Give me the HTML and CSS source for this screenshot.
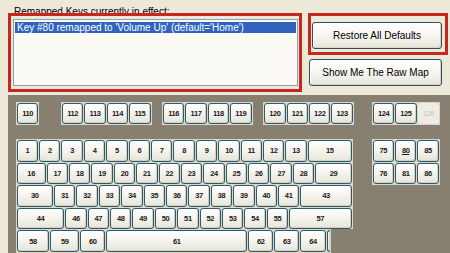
FILE: index.html
```html
<!DOCTYPE html>
<html>
<head>
<meta charset="utf-8">
<link rel="stylesheet" href="styles.css">
</head>
<body>
<div class="top">
  <div class="left">
    <div class="label">Remapped Keys currently in effect:</div>
    <div class="redbox listwrap">
      <div class="listbox">
        <div class="item sel">Key #80 remapped to 'Volume Up' (default='Home')</div>
      </div>
    </div>
  </div>
  <div class="right">
    <div class="redbox btnwrap"><div class="btn restore">Restore All Defaults</div></div>
    <div class="btn raw">Show Me The Raw Map</div>
  </div>
</div>
<div class="panel">
  <div class="frow">
    <div class="grp"><div class="k">110</div></div>
    <div class="grp g2"><div class="k">112</div><div class="k">113</div><div class="k">114</div><div class="k">115</div></div>
    <div class="grp g3"><div class="k">116</div><div class="k">117</div><div class="k">118</div><div class="k">119</div></div>
    <div class="grp g4"><div class="k">120</div><div class="k">121</div><div class="k">122</div><div class="k">123</div></div>
    <div class="grp g5"><div class="k">124</div><div class="k">125</div><div class="k dis">126</div></div>
  </div>
  <div class="mainarea">
    <div class="mainblock">
      <div class="upper">
        <div class="row">
          <div class="k">1</div><div class="k">2</div><div class="k">3</div><div class="k">4</div><div class="k">5</div><div class="k">6</div><div class="k">7</div><div class="k">8</div><div class="k">9</div><div class="k">10</div><div class="k">11</div><div class="k">12</div><div class="k">13</div><div class="k w200">15</div>
        </div>
        <div class="row">
          <div class="k w133">16</div><div class="k">17</div><div class="k">18</div><div class="k">19</div><div class="k">20</div><div class="k">21</div><div class="k">22</div><div class="k">23</div><div class="k">24</div><div class="k">25</div><div class="k">26</div><div class="k">27</div><div class="k">28</div><div class="k w167">29</div>
        </div>
        <div class="row">
          <div class="k w167">30</div><div class="k">31</div><div class="k">32</div><div class="k">33</div><div class="k">34</div><div class="k">35</div><div class="k">36</div><div class="k">37</div><div class="k">38</div><div class="k">39</div><div class="k">40</div><div class="k">41</div><div class="k w233">43</div>
        </div>
        <div class="row">
          <div class="k w217">44</div><div class="k">46</div><div class="k">47</div><div class="k">48</div><div class="k">49</div><div class="k">50</div><div class="k">51</div><div class="k">52</div><div class="k">53</div><div class="k">54</div><div class="k">55</div><div class="k w283">57</div>
        </div>
      </div>
      <div class="lower">
        <div class="row">
          <div class="k w150">58</div><div class="k w133">59</div><div class="k w117">60</div><div class="k w633">61</div><div class="k w117">62</div><div class="k w117">63</div><div class="k w117">64</div><div class="k stub"></div>
        </div>
      </div>
    </div>
    <div class="grp nav">
      <div class="row"><div class="k">75</div><div class="k"><u>80</u></div><div class="k">85</div></div>
      <div class="row"><div class="k">76</div><div class="k">81</div><div class="k">86</div></div>
    </div>
  </div>
</div>
</body>
</html>
```

FILE: styles.css
```css
html, body {
  margin: 0;
  padding: 0;
  width: 450px;
  height: 253px;
  overflow: hidden;
  background: #ECE9D9;
  font-family: "Liberation Sans", Arial, sans-serif;
  color: #000;
}

.top {
  display: flex;
  height: 95px;
}

.left {
  margin-left: 8px;
  width: 294px;
}

.label {
  margin: 7px 0 0 6px;
  font-size: 10px;
  line-height: 10px;
  height: 10px;
  white-space: nowrap;
}

.redbox {
  position: relative;
  box-sizing: border-box;
  border: 3px solid #C8261F;
  background: #ECE9D9;
}

.listwrap {
  margin-top: -4px;
  width: 294px;
  height: 79px;
  padding: 3px 1px 3px 2px;
}

.listbox {
  box-sizing: border-box;
  width: 285px;
  height: 67px;
  border: 1px solid #8A9FB4;
  background: #FBFAF4;
  padding: 2px 1px;
}

.item {
  font-size: 10px;
  line-height: 11px;
  height: 11px;
  padding-left: 2px;
  white-space: nowrap;
}

.sel {
  background: #2F63BE;
  color: #fff;
}

.right {
  margin-left: 6px;
  display: flex;
  flex-direction: column;
}

.btnwrap {
  margin-top: 13px;
  width: 140px;
  height: 42px;
  padding: 6px 3px 3px 1px;
}

.btn {
  box-sizing: border-box;
  display: flex;
  align-items: center;
  justify-content: center;
  font-size: 10px;
  border: 1px solid #2E4E5C;
  border-radius: 3px;
  background: linear-gradient(#FFFFFF, #F5F4EE 55%, #E6E4D8);
  box-shadow: inset -1px -1px 0 #D9D6C8, inset 1px 1px 0 #FFFFFF;
  white-space: nowrap;
}

.restore {
  width: 130px;
  height: 27px;
}

.raw {
  margin-top: 4px;
  margin-left: 1px;
  width: 133px;
  height: 27px;
}

.panel {
  --u: 22.4px;
  margin-left: 8px;
  height: 158px;
  background: #877F70;
  padding: 6.7px 0 0 8px;
  box-sizing: border-box;
  overflow: hidden;
}

.frow {
  display: flex;
}

.grp {
  display: flex;
  background: #D9D7CC;
  padding: 1px 0 1px 1px;
}

.g2 { margin-left: 21.6px; }
.g3 { margin-left: 10.4px; }
.g4 { margin-left: 10.8px; }
.g5 { margin-left: 18px; }

.k {
  box-sizing: border-box;
  flex: none;
  width: calc(var(--u) - 1px);
  height: 21.6px;
  margin-right: 1px;
  border: 1px solid #2F5A6A;
  border-radius: 3px;
  background: linear-gradient(#FFFFFF, #F4F3EC 50%, #E7E5DA);
  box-shadow: inset -1px -1px 0 #D3D0C2;
  display: flex;
  align-items: center;
  justify-content: center;
  font-size: 7.5px;
  font-weight: bold;
  letter-spacing: -0.4px;
  color: #1A1A1A;
}

.k.dis {
  border-color: transparent;
  background: #EFEDE3;
  box-shadow: none;
  color: #C9C5B6;
  font-weight: normal;
}

.w117 { width: calc(var(--u) * 1.1667 - 1px); }
.w133 { width: calc(var(--u) * 1.3333 - 1px); }
.w150 { width: calc(var(--u) * 1.5 - 1px); }
.w167 { width: calc(var(--u) * 1.6667 - 1px); }
.w200 { width: calc(var(--u) * 2 - 1px); }
.w217 { width: calc(var(--u) * 2.1667 - 1px); }
.w233 { width: calc(var(--u) * 2.3333 - 1px); }
.w283 { width: calc(var(--u) * 2.8333 - 1px); }
.w633 { width: calc(var(--u) * 6.3333 - 1px); }

.k.stub {
  width: 3px;
  border-right: none;
  border-radius: 3px 0 0 3px;
}

.mainarea {
  display: flex;
  align-items: flex-start;
  margin-top: 13.7px;
  margin-left: -0.3px;
}

.mainblock {
  display: flex;
  flex-direction: column;
  align-items: flex-start;
}

.row {
  display: flex;
}

.upper {
  background: #D9D7CC;
  padding: 1px 0 0 1px;
}

.upper .row + .row {
  margin-top: 1px;
}

.lower {
  background: #D9D7CC;
  padding: 1px 0 1px 1px;
}

.nav {
  flex-direction: column;
  margin-left: 19px;
}

.nav .row + .row {
  margin-top: 1px;
}
```
